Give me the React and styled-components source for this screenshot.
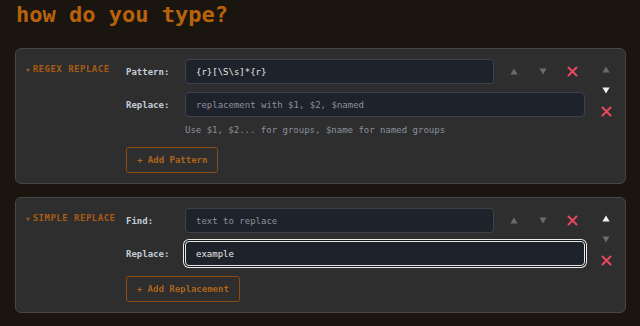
import React from 'react'
import styled, { createGlobalStyle } from 'styled-components'

const GlobalStyle = createGlobalStyle`
  html, body {
    margin: 0;
    padding: 0;
    background: #1b1510;
    font-family: "DejaVu Sans Mono", "Liberation Mono", monospace;
  }
`

const Page = styled.div`
  padding: 0 14px 0 15px;
`

const Title = styled.h1`
  margin: 2px 0 20px 1px;
  color: #b8630c;
  font-size: 22px;
  font-weight: 700;
  line-height: 26px;
`

const Card = styled.section`
  display: flex;
  min-height: ${p => p.$minHeight || 0}px;
  background: #2e2e2e;
  border: 1px solid #474747;
  border-radius: 6px;
  padding: 10px 5px 10px 10px;
  margin-bottom: 13px;
`

const SectionName = styled.div`
  width: 100px;
  flex-shrink: 0;
  display: flex;
  align-items: center;
  gap: 3px;
  height: 20px;
  color: #a85a14;
  font-size: 9px;
  font-weight: 700;
  letter-spacing: 0.5px;
  text-transform: uppercase;
`

const Caret = styled.span`
  font-size: 6px;
  letter-spacing: 0;
`

const Body = styled.div`
  flex: 1;
  display: flex;
  flex-direction: column;
`

const Rows = styled.div`
  display: flex;
  flex-direction: column;
  gap: 8px;
`

const Row = styled.div`
  display: flex;
  align-items: center;
  height: 25px;
`

const Label = styled.label`
  width: 59px;
  flex-shrink: 0;
  color: #c5ccd6;
  font-size: 9px;
  font-weight: 700;
`

const Input = styled.input`
  flex: 1;
  min-width: 0;
  height: 25px;
  box-sizing: border-box;
  background: #1e222a;
  border: 1px solid ${p => (p.$focused ? '#e6e6e6' : '#3c434d')};
  border-radius: 4px;
  padding: 0 10px;
  color: #e8e8e8;
  caret-color: #f0f0f0;
  font-family: inherit;
  font-size: 9px;
  outline: none;
  box-shadow: ${p => (p.$focused ? '0 0 0 1px #14171c, 0 0 0 2px #ececec' : 'none')};

  &::placeholder {
    color: #8a929c;
  }
`

const RowControls = styled.div`
  display: flex;
  gap: 3px;
  margin-left: 7px;
`

const IconButton = styled.button`
  width: 26px;
  height: 21px;
  padding: 0;
  border: none;
  background: transparent;
  display: flex;
  align-items: center;
  justify-content: center;
  color: ${p => p.$color};
  cursor: pointer;
`

const Hint = styled.div`
  margin: 6px 0 0 59px;
  line-height: 14px;
  color: #8a929c;
  font-size: 9px;
`

const AddButton = styled.button`
  align-self: flex-start;
  margin-top: 10px;
  height: 26px;
  padding: 0 10px;
  background: transparent;
  border: 1px solid #8b4c12;
  border-radius: 3px;
  color: #b0641c;
  font-family: inherit;
  font-size: 9px;
  font-weight: 700;
`

const SideControls = styled.div`
  width: 28px;
  margin-left: 7px;
  display: flex;
  flex-direction: column;
  align-items: center;
`

const UP = '#6a6a6a'
const ACTIVE = '#f2f2f2'
const RED = '#e8485c'

const Up = () => (
  <svg width="8" height="7" viewBox="0 0 8 7"><path d="M4 0.5 L7.6 6.5 L0.4 6.5 Z" fill="currentColor" /></svg>
)

const Down = () => (
  <svg width="8" height="7" viewBox="0 0 8 7"><path d="M0.4 0.5 L7.6 0.5 L4 6.5 Z" fill="currentColor" /></svg>
)

const Cross = () => (
  <svg width="11" height="11" viewBox="0 0 11 11">
    <path d="M1.5 1.5 L9.5 9.5 M9.5 1.5 L1.5 9.5" stroke="currentColor" strokeWidth="2" strokeLinecap="round" />
  </svg>
)

function RowButtons() {
  return (
    <RowControls>
      <IconButton $color={UP}><Up /></IconButton>
      <IconButton $color={UP}><Down /></IconButton>
      <IconButton $color={RED}><Cross /></IconButton>
    </RowControls>
  )
}

function SectionButtons({ canUp, canDown }) {
  return (
    <SideControls>
      <IconButton $color={canUp ? ACTIVE : UP}><Up /></IconButton>
      <IconButton $color={canDown ? ACTIVE : UP}><Down /></IconButton>
      <IconButton $color={RED}><Cross /></IconButton>
    </SideControls>
  )
}

export default function App() {
  return (
    <>
      <GlobalStyle />
      <Page>
        <Title>how do you type?</Title>

        <Card>
          <SectionName><Caret>▼</Caret>Regex Replace</SectionName>
          <Body>
            <Rows>
              <Row>
                <Label>Pattern:</Label>
                <Input defaultValue="{r}[\S\s]*{r}" />
                <RowButtons />
              </Row>
              <Row>
                <Label>Replace:</Label>
                <Input placeholder="replacement with $1, $2, $named" />
              </Row>
            </Rows>
            <Hint>Use $1, $2... for groups, $name for named groups</Hint>
            <AddButton>+ Add Pattern</AddButton>
          </Body>
          <SectionButtons canDown />
        </Card>

        <Card>
          <SectionName><Caret>▼</Caret>Simple Replace</SectionName>
          <Body>
            <Rows>
              <Row>
                <Label>Find:</Label>
                <Input placeholder="text to replace" />
                <RowButtons />
              </Row>
              <Row>
                <Label>Replace:</Label>
                <Input $focused autoFocus defaultValue="example" />
              </Row>
            </Rows>
            <AddButton>+ Add Replacement</AddButton>
          </Body>
          <SectionButtons canUp />
        </Card>

        {/* next section starts just below the fold */}
        <Card $minHeight={60} />
      </Page>
    </>
  )
}
